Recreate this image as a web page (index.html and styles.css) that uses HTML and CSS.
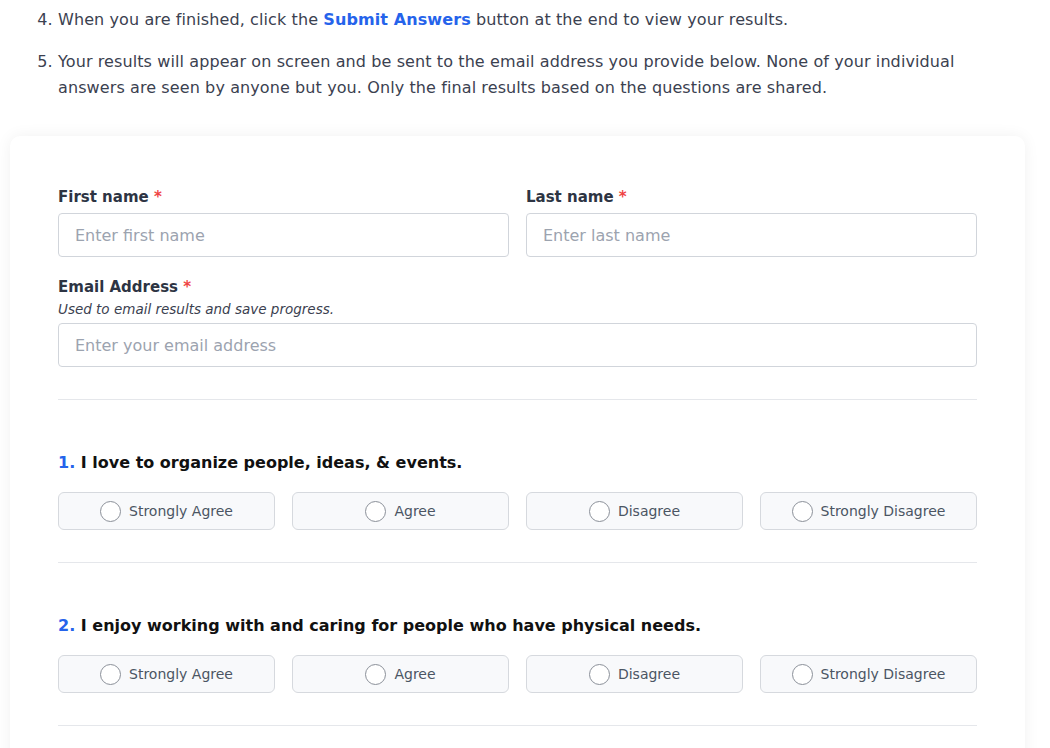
FILE: index.html
```html
<!DOCTYPE html>
<html lang="en">
<head>
  <meta charset="UTF-8" />
  <meta name="viewport" content="width=device-width, initial-scale=1.0"/>
  <title>Spiritual Gifts Survey</title>
  <link rel="stylesheet" href="styles.css">
</head>
<body>
  <div class="page">
    <ol class="steps" start="4">
      <li>When you are finished, click the <strong>Submit Answers</strong> button at the end to view your results.</li>
      <li>Your results will appear on screen and be sent to the email address you provide below. None of your individual answers are seen by anyone but you. Only the final results based on the questions are shared.</li>
    </ol>

    <form class="card">
      <div class="contact">
        <div class="row">
          <div class="field">
            <label for="firstName">First name <span class="req">*</span></label>
            <input type="text" id="firstName" placeholder="Enter first name">
          </div>
          <div class="field">
            <label for="lastName">Last name <span class="req">*</span></label>
            <input type="text" id="lastName" placeholder="Enter last name">
          </div>
        </div>
        <div class="field">
          <label for="email">Email Address <span class="req">*</span></label>
          <p class="hint">Used to email results and save progress.</p>
          <input type="email" id="email" placeholder="Enter your email address">
        </div>
      </div>

      <div class="question">
        <h3><span class="num">1.</span> I love to organize people, ideas, &amp; events.</h3>
        <div class="options">
          <label class="option"><input type="radio" name="q1"><span class="dot"></span>Strongly Agree</label>
          <label class="option"><input type="radio" name="q1"><span class="dot"></span>Agree</label>
          <label class="option"><input type="radio" name="q1"><span class="dot"></span>Disagree</label>
          <label class="option"><input type="radio" name="q1"><span class="dot"></span>Strongly Disagree</label>
        </div>
      </div>

      <div class="question">
        <h3><span class="num">2.</span> I enjoy working with and caring for people who have physical needs.</h3>
        <div class="options">
          <label class="option"><input type="radio" name="q2"><span class="dot"></span>Strongly Agree</label>
          <label class="option"><input type="radio" name="q2"><span class="dot"></span>Agree</label>
          <label class="option"><input type="radio" name="q2"><span class="dot"></span>Disagree</label>
          <label class="option"><input type="radio" name="q2"><span class="dot"></span>Strongly Disagree</label>
        </div>
      </div>
    </form>
  </div>
</body>
</html>
```

FILE: styles.css
```css
* {
  box-sizing: border-box;
}
body {
  margin: 0;
  font-family: "DejaVu Sans", Verdana, sans-serif;
  color: #3b4150;
  background: #fff;
}
.page {
  width: 1015px;
  margin-left: 10px;
  padding-top: 7px;
}
.steps {
  margin: 0 0 35px;
  padding-left: 48px;
  font-size: 16px;
  letter-spacing: 0.1px;
  line-height: 26px;
}
.steps li {
  margin-bottom: 16px;
}
.steps li:last-child {
  margin-bottom: 0;
}
.steps strong {
  color: #2563eb;
  font-weight: 700;
}
.card {
  background: #fff;
  border-radius: 10px;
  box-shadow: 0 0 16px rgba(0,0,0,0.06);
  padding: 48px 48px 0;
  min-height: 700px;
}
.contact {
  display: flex;
  flex-direction: column;
  gap: 17px;
  padding-bottom: 32px;
  border-bottom: 1px solid #e5e7eb;
}
.row {
  display: grid;
  grid-template-columns: 1fr 1fr;
  gap: 17px;
}
.field label {
  display: block;
  font-size: 15px;
  font-weight: 600;
  line-height: 26px;
  color: #2d3443;
  margin-bottom: 3px;
}
.req {
  color: #ef4444;
}
.hint {
  margin: -4px 0 4px;
  font-size: 13.5px;
  font-style: italic;
  line-height: 20px;
  color: #3b4150;
}
.field input {
  display: block;
  width: 100%;
  height: 44px;
  padding: 0 16px;
  font: inherit;
  font-size: 16px;
  color: #2d3443;
  border: 1px solid #d1d5db;
  border-radius: 4px;
  outline: none;
}
.field input::placeholder {
  color: #9ca3af;
}
.question {
  padding: 49px 0 32px;
  border-bottom: 1px solid #e5e7eb;
}
.question h3 {
  margin: 0 0 15px;
  font-size: 16px;
  font-weight: 700;
  line-height: 28px;
  color: #111;
}
.num {
  color: #2563eb;
}
.options {
  display: grid;
  grid-template-columns: repeat(4, 1fr);
  gap: 17px;
}
.option {
  display: flex;
  align-items: center;
  justify-content: center;
  gap: 8px;
  height: 38px;
  background: #f8f9fb;
  border: 1px solid #d6d9de;
  border-radius: 6px;
  font-size: 14px;
  color: #4b5563;
  cursor: pointer;
}
.option input {
  display: none;
}
.dot {
  width: 21px;
  height: 21px;
  border: 1px solid #8b9099;
  border-radius: 50%;
  background: #fff;
}
```
